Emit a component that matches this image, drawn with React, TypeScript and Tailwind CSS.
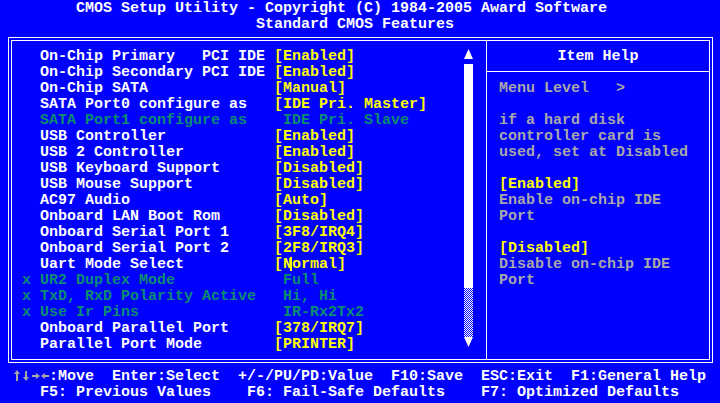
type Item = {
  label: string;
  value: string;
  off?: boolean;
  x?: boolean;
  cursor?: boolean;
};

const items: Item[] = [
  { label: 'On-Chip Primary   PCI IDE', value: '[Enabled]' },
  { label: 'On-Chip Secondary PCI IDE', value: '[Enabled]' },
  { label: 'On-Chip SATA', value: '[Manual]' },
  { label: 'SATA Port0 configure as', value: '[IDE Pri. Master]' },
  { label: 'SATA Port1 configure as', value: ' IDE Pri. Slave', off: true },
  { label: 'USB Controller', value: '[Enabled]' },
  { label: 'USB 2 Controller', value: '[Enabled]' },
  { label: 'USB Keyboard Support', value: '[Disabled]' },
  { label: 'USB Mouse Support', value: '[Disabled]' },
  { label: 'AC97 Audio', value: '[Auto]' },
  { label: 'Onboard LAN Boot Rom', value: '[Disabled]' },
  { label: 'Onboard Serial Port 1', value: '[3F8/IRQ4]' },
  { label: 'Onboard Serial Port 2', value: '[2F8/IRQ3]' },
  { label: 'Uart Mode Select', value: '[Normal]', cursor: true },
  { label: 'UR2 Duplex Mode', value: ' Full', off: true, x: true },
  { label: 'TxD, RxD Polarity Active', value: ' Hi, Hi', off: true, x: true },
  { label: 'Use Ir Pins', value: ' IR-Rx2Tx2', off: true, x: true },
  { label: 'Onboard Parallel Port', value: '[378/IRQ7]' },
  { label: 'Parallel Port Mode', value: '[PRINTER]' },
];

// help text lines, yellow ones are option names
const help: { text: string; yellow?: boolean }[] = [
  { text: 'Menu Level   >' },
  { text: '' },
  { text: 'if a hard disk' },
  { text: 'controller card is' },
  { text: 'used, set at Disabled' },
  { text: '' },
  { text: '[Enabled]', yellow: true },
  { text: 'Enable on-chip IDE' },
  { text: 'Port' },
  { text: '' },
  { text: '[Disabled]', yellow: true },
  { text: 'Disable on-chip IDE' },
  { text: 'Port' },
];

const Row = ({ item }: { item: Item }) => {
  const dim = 'text-[#0a8c70]';
  return (
    <div className="flex h-4 whitespace-pre pt-px">
      <span className={`w-[18px] ${dim}`}>{item.x ? 'x' : ''}</span>
      <span className={`w-[234px] ${item.off ? dim : 'text-white'}`}>{item.label}</span>
      {item.cursor ? (
        <span className="text-[#ffff00]">
          [<span className="relative">
            N
            <span className="absolute left-[7px] top-[1px] h-[14px] w-[2px] bg-[#ffff00]" />
          </span>
          ormal]
        </span>
      ) : (
        <span className={item.off ? dim : 'text-[#ffff00]'}>{item.value}</span>
      )}
    </div>
  );
};

const ScrollBar = () => (
  <div className="mt-px flex w-[9px] flex-col">
    <svg width="9" height="10" viewBox="0 0 9 10">
      <polygon points="4.5,0 9,10 0,10" fill="#ffffff" />
    </svg>
    <div className="mt-[5px] h-[224px] bg-white" />
    <div className="h-[49px] bg-[repeating-conic-gradient(#ffffff_0_25%,#0000ff_0_50%)] bg-[length:2px_2px]" />
    <svg width="9" height="10" viewBox="0 0 9 10">
      <polygon points="0,0 9,0 4.5,10" fill="#ffffff" />
    </svg>
  </div>
);

// the four cursor-key arrows of the footer, VGA style
const Arrows = () => (
  <svg width="36" height="16" viewBox="0 0 36 16" fill="#a8a8a8">
    <rect x="3" y="5" width="2" height="8" />
    <polygon points="4,2 7,6 1,6" />
    <rect x="12" y="3" width="2" height="8" />
    <polygon points="13,13 16,9 10,9" />
    <rect x="19" y="7" width="5" height="2" />
    <polygon points="27,8 23,5 23,11" />
    <rect x="31" y="7" width="5" height="2" />
    <polygon points="28,8 32,5 32,11" />
  </svg>
);

export default function App() {
  return (
    <div className="h-[403px] w-[720px] overflow-hidden bg-[#0000ff] font-['Liberation_Mono',monospace] text-[15px] font-bold leading-[16px] text-white">
      <div className="h-4 whitespace-pre pl-[76px] pt-px">CMOS Setup Utility - Copyright (C) 1984-2005 Award Software</div>
      <div className="h-4 whitespace-pre pl-[256px] pt-px">Standard CMOS Features</div>

      <div className="pb-[5px] pl-[8px] pt-[5px]">
        <div className="h-[326px] w-[705px] border border-white">
          <div className="m-[2px] flex h-[320px] border border-white">
            <div className="flex w-[474px] pl-[10px] pt-[7px]">
              <div className="w-[442px]">
                {items.map((it) => (
                  <Row key={it.label} item={it} />
                ))}
              </div>
              <ScrollBar />
            </div>
            <div className="w-[223px] border-l border-white">
              <div className="mt-[7px] h-4 pt-px text-center">Item Help</div>
              <div className="mt-[7px] border-t border-white" />
              <div className="mt-[8px] pl-[12px] text-[#a8a8a8]">
                {help.map((h, i) => (
                  <div key={i} className={`h-4 whitespace-pre pt-px ${h.yellow ? 'text-[#ffff00]' : ''}`}>
                    {h.text}
                  </div>
                ))}
              </div>
            </div>
          </div>
        </div>
      </div>

      <div className="flex h-4 whitespace-pre pl-[13px]">
        <Arrows />
        <span className="pt-px">:Move  Enter:Select  +/-/PU/PD:Value  F10:Save  ESC:Exit  F1:General Help</span>
      </div>
      <div className="h-4 whitespace-pre pl-[13px] pt-px">   F5: Previous Values    F6: Fail-Safe Defaults    F7: Optimized Defaults</div>
    </div>
  );
}
